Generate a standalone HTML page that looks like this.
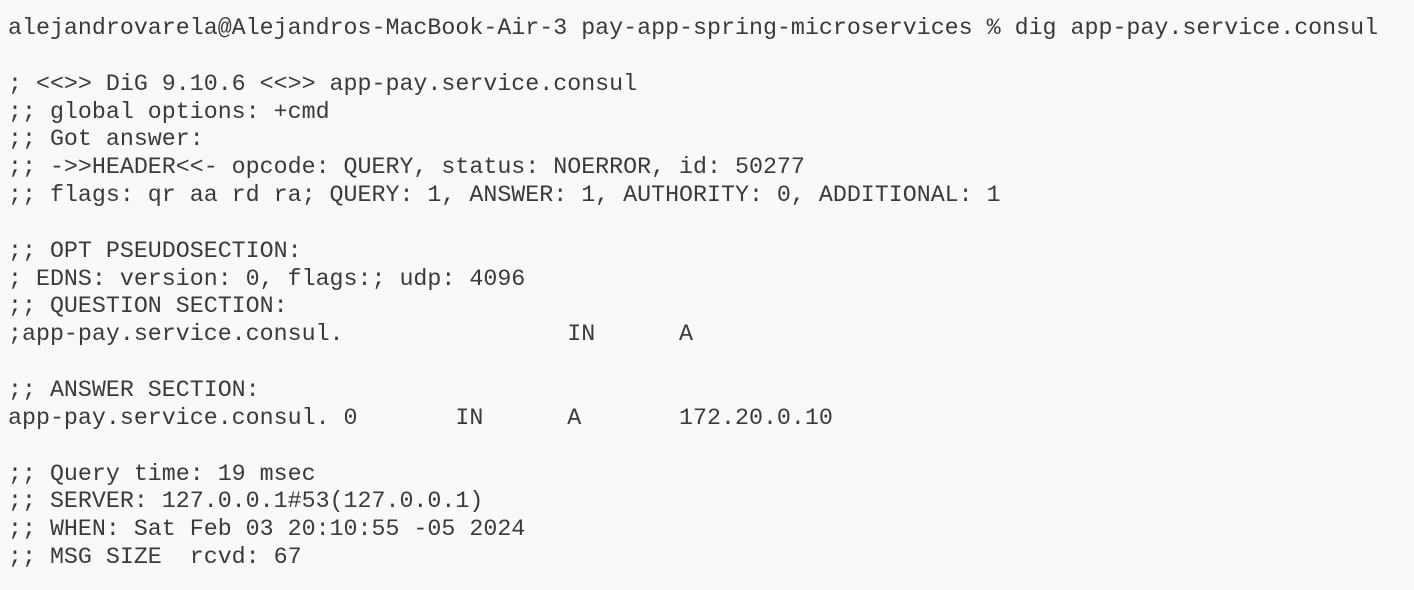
<!DOCTYPE html>
<html><head><meta charset="utf-8"><style>
html,body{margin:0;padding:0;background:#f9f9f9;width:1414px;height:590px;overflow:hidden}
pre{margin:0;padding:15px 0 0 8px;font-family:"Liberation Mono",monospace;font-size:23.3px;line-height:27.85px;color:#3a3a3a}
</style></head><body><pre>alejandrovarela@Alejandros-MacBook-Air-3 pay-app-spring-microservices % dig app-pay.service.consul

; &lt;&lt;&gt;&gt; DiG 9.10.6 &lt;&lt;&gt;&gt; app-pay.service.consul
;; global options: +cmd
;; Got answer:
;; -&gt;&gt;HEADER&lt;&lt;- opcode: QUERY, status: NOERROR, id: 50277
;; flags: qr aa rd ra; QUERY: 1, ANSWER: 1, AUTHORITY: 0, ADDITIONAL: 1

;; OPT PSEUDOSECTION:
; EDNS: version: 0, flags:; udp: 4096
;; QUESTION SECTION:
;app-pay.service.consul.                IN      A

;; ANSWER SECTION:
app-pay.service.consul. 0       IN      A       172.20.0.10

;; Query time: 19 msec
;; SERVER: 127.0.0.1#53(127.0.0.1)
;; WHEN: Sat Feb 03 20:10:55 -05 2024
;; MSG SIZE  rcvd: 67</pre></body></html>
